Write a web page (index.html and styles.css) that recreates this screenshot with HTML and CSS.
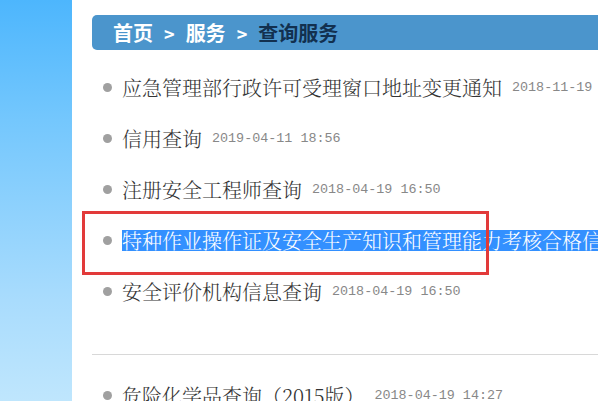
FILE: index.html
```html
<!DOCTYPE html>
<html lang="zh-CN">
<head>
  <meta charset="UTF-8" />
  <title>查询服务</title>
  <link rel="stylesheet" href="styles.css">
</head>
<body>
  <div class="page">
    <aside class="side"></aside>

    <main class="main">
      <div class="crumb">
        <span class="crumb-link">首页</span>
        <span class="crumb-sep">&gt;</span>
        <span class="crumb-link">服务</span>
        <span class="crumb-sep">&gt;</span>
        <span class="crumb-cur">查询服务</span>
      </div>

      <ul class="list">
        <li class="item">
          <span class="dot"></span>
          <span class="title">应急管理部行政许可受理窗口地址变更通知</span>
          <span class="date">2018-11-19 09:30</span>
        </li>
        <li class="item">
          <span class="dot"></span>
          <span class="title">信用查询</span>
          <span class="date">2019-04-11 18:56</span>
        </li>
        <li class="item">
          <span class="dot"></span>
          <span class="title">注册安全工程师查询</span>
          <span class="date">2018-04-19 16:50</span>
        </li>
        <li class="item">
          <span class="dot"></span>
          <span class="title picked">特种作业操作证及安全生产知识和管理能力考核合格信息查询</span>
          <span class="date">2018-04-19 16:50</span>
        </li>
        <li class="item">
          <span class="dot"></span>
          <span class="title">安全评价机构信息查询</span>
          <span class="date">2018-04-19 16:50</span>
        </li>
      </ul>

      <hr class="rule">

      <ul class="list">
        <li class="item">
          <span class="dot"></span>
          <span class="title">危险化学品查询（2015版）</span>
          <span class="date">2018-04-19 14:27</span>
        </li>
      </ul>
    </main>
  </div>

  <!-- red annotation box over the 4th row -->
  <div class="mark"></div>
</body>
</html>
```

FILE: styles.css
```css
* {
  box-sizing: border-box;
}
html, body {
  margin: 0;
  height: 100%;
  overflow: hidden;
  background: #fff;
}
body {
  font-family: "Noto Serif CJK SC", "Noto Sans CJK SC", serif;
  color: #333;
}
.page {
  display: flex;
  height: 100%;
}
.side {
  flex: 0 0 72px;
  background: linear-gradient(180deg, #4db6fd 0%, #74c7fd 30%, #a9dcfd 75%, #bfe6fd 100%);
}
.main {
  flex: 1;
  min-width: 0;
  padding: 15px 0 0 20px;
  overflow: hidden;
}
.crumb {
  display: flex;
  align-items: center;
  height: 35px;
  padding-left: 21px;
  background: #4b95cc;
  border-radius: 5px 0 0 5px;
  font-family: "Noto Sans CJK SC", sans-serif;
  font-weight: 700;
  font-size: 20px;
  color: #fff;
  white-space: nowrap;
}
.crumb-sep {
  margin: 0 11px;
  font-size: 18px;
}
.crumb-cur {
  color: #12304f;
}
.list {
  list-style: none;
  margin: 12px 0 0;
  padding: 0;
}
.item {
  display: flex;
  align-items: center;
  height: 51px;
  white-space: nowrap;
}
.dot {
  flex: 0 0 9px;
  width: 9px;
  height: 9px;
  margin: 0 10px 0 11px;
  border-radius: 50%;
  background: #a0a0a0;
}
.title {
  font-size: 20px;
  font-weight: 300;
  color: #333;
}
.title.picked {
  display: inline-block;
  line-height: 21px;
  background: #3390ff;
  color: #fff;
}
.date {
  margin-left: 10px;
  font-family: "Liberation Mono", monospace;
  font-size: 13.4px;
  color: #888;
}
.rule {
  margin: 37px 0 0;
  border: 0;
  border-top: 1px solid #d8d8d8;
}
.rule + .list {
  margin-top: 15px;
}
.mark {
  position: absolute;
  left: 82px;
  top: 211px;
  width: 407px;
  height: 64px;
  border: 3px solid #e23a3a;
}
```
